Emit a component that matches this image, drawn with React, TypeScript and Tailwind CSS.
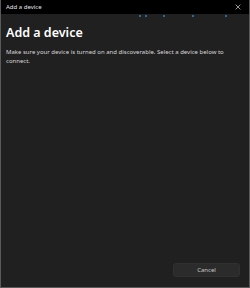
import React from "react";

const font = { fontFamily: '"Noto Sans", "Open Sans", sans-serif' };

const App = () => {
  const dots = [139, 145, 163, 192, 225];

  return (
    <div
      className="w-[250px] h-[288px] flex flex-col bg-[#202020] border-x border-b border-[#5a5a5a]"
      style={font}
    >
      <div className="h-[14px] flex items-center justify-between bg-black pl-[5px] pr-[8px]">
        <span className="text-[6px] text-[#e6e6e6] leading-none">Add a device</span>
        <svg width="6" height="6" viewBox="0 0 10 10" className="text-[#cfcfcf]">
          <path d="M1 1 L9 9 M9 1 L1 9" stroke="currentColor" strokeWidth="1.2" />
        </svg>
      </div>

      <div className="relative flex-1 flex flex-col">
        {/* indeterminate progress dots */}
        {dots.map((x) => (
          <span
            key={x}
            className="absolute top-[1px] w-[2px] h-[2px] rounded-full bg-[#2f7fc4]"
            style={{ left: x - 1 }}
          />
        ))}

        <div className="px-[5px] pt-[11px]">
          <h1 className="text-[12.5px] font-semibold text-white leading-[16px]">Add a device</h1>
          <p className="mt-[7px] text-[6px] leading-[8.5px] text-[#d8d8d8]">
            Make sure your device is turned on and discoverable. Select a device below to
            connect.
          </p>
        </div>

        <div className="mt-auto flex justify-end pr-[9px] pb-[10px]">
          <button className="w-[67px] h-[14px] rounded-[3px] bg-[#2b2b2b] border border-[#303030] text-[6px] text-[#c8c8c8]">
            Cancel
          </button>
        </div>
      </div>
    </div>
  );
};

export default App;
